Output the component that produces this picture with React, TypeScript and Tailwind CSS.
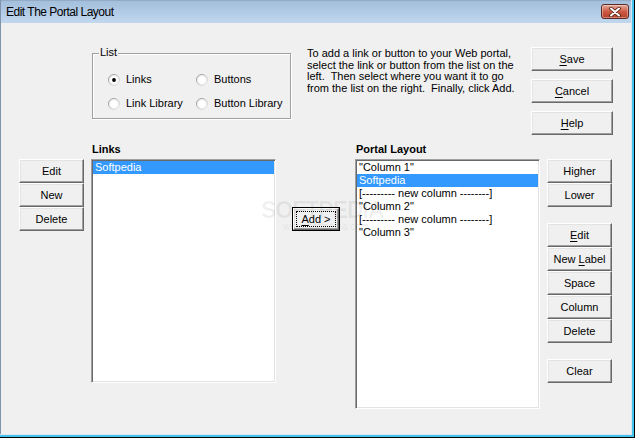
import React from "react";

const btnBase =
  "flex items-center justify-center bg-[#f0f0f0] border border-t-white border-l-white border-r-[#696969] border-b-[#696969] shadow-[inset_-1px_-1px_0_#a0a0a0,inset_1px_1px_0_#e3e3e3] text-[11px] text-black leading-none";

function Btn({ children, className = "" }: { children: React.ReactNode; className?: string }) {
  return <div className={`${btnBase} ${className}`}>{children}</div>;
}

function U({ children }: { children: React.ReactNode }) {
  return <span className="underline underline-offset-[2px] decoration-[1px]">{children}</span>;
}

function Radio({ checked, label }: { checked?: boolean; label: string }) {
  return (
    <div className="flex items-center h-[13px] gap-[6px]">
      <svg width="12" height="12" viewBox="0 0 12 12" className="shrink-0">
        <defs>
          <linearGradient id="rg" x1="0" y1="0" x2="1" y2="1">
            <stop offset="0" stopColor="#8a8a8a" />
            <stop offset="1" stopColor="#f2f2f2" />
          </linearGradient>
        </defs>
        <circle cx="6" cy="6" r="5.5" fill="#f7f7f7" stroke="url(#rg)" strokeWidth="1" />
        <circle cx="6" cy="6" r="4.3" fill="#fff" stroke="#e2e2e2" strokeWidth="0.6" />
        {checked && <circle cx="6" cy="6" r="1.9" fill="#000" />}
      </svg>
      <span className="leading-[13px]">{label}</span>
    </div>
  );
}

function Row({ text, selected }: { text: string; selected?: boolean }) {
  return (
    <div
      className={`h-[13px] leading-[13px] pl-[2px] whitespace-pre ${
        selected ? "bg-[#3399ff] text-white" : "text-black"
      }`}
    >
      {text}
    </div>
  );
}

const listCls =
  "bg-white border border-t-[#a0a0a0] border-l-[#a0a0a0] border-r-white border-b-white shadow-[inset_1px_1px_0_#696969,inset_-1px_-1px_0_#e3e3e3] p-[1px]";

export default function App() {
  return (
    <div className="w-[635px] h-[438px] bg-black pr-px pb-px font-['Liberation_Sans',Arial,sans-serif] text-[11px] text-black select-none">
      <div className="w-full h-full bg-[#45c2ec] pr-[2px] pb-[2px]">
        <div className="w-full h-full bg-[#d9e6f2] pr-px pb-px">
          <div className="w-full h-full flex flex-col border-l border-[#7f93ab]">
            {/* Title bar */}
            <div className="h-[23px] shrink-0 flex items-start justify-between bg-gradient-to-b from-[#a3bfdc] to-[#c1d7ee] border-t border-[#93abc6]">
              <span className="self-center pl-[5px] text-[12px] tracking-[-0.5px] text-black font-['Liberation_Sans',sans-serif]">
                Edit The Portal Layout
              </span>
              <div className="mt-[3px] mr-[2px] w-[28px] h-[15px] rounded-[3px] border border-[#5e2b22] bg-gradient-to-b from-[#e3aa9c] via-[#cc5a43] to-[#b6402a] shadow-[inset_0_0_0_1px_rgba(255,255,255,0.35)] flex items-center justify-center">
                <svg width="14" height="10" viewBox="0 0 14 10">
                  <path d="M3 1.5 L11 8.5 M11 1.5 L3 8.5" stroke="#4d1c14" strokeWidth="3.6" strokeLinecap="round" />
                  <path d="M3 1.5 L11 8.5 M11 1.5 L3 8.5" stroke="#ffffff" strokeWidth="2" strokeLinecap="round" />
                </svg>
              </div>
            </div>

            {/* Body */}
            <div className="relative flex-1 bg-[#f0f0f0] flex flex-col">
              {/* Top row */}
              <div className="flex items-start pt-[24px]">
                <div className="relative ml-[91px] mt-[6px] w-[199px] h-[66px] border border-[#a0a0a0] shadow-[inset_1px_1px_0_#fff,1px_1px_0_#fff]">
                  <span className="absolute -top-[8px] left-[6px] px-[1px] bg-[#f0f0f0] leading-[13px]">List</span>
                  <div className="grid grid-cols-[88px_auto] gap-y-[11px] pl-[15px] pt-[19px]">
                    <Radio checked label="Links" />
                    <Radio label="Buttons" />
                    <Radio label="Link Library" />
                    <Radio label="Button Library" />
                  </div>
                </div>
                <div className="ml-[16px] mt-[1px] w-[210px] leading-[11.5px] whitespace-pre">
                  <div>To add a link or button to your Web portal,</div>
                  <div>select the link or button from the list on the</div>
                  <div>left.  Then select where you want it to go</div>
                  <div>from the list on the right.  Finally, click Add.</div>
                </div>
                <div className="ml-[14px] flex flex-col gap-[8px]">
                  <Btn className="w-[82px] h-[24px]">
                    <U>S</U>ave
                  </Btn>
                  <Btn className="w-[82px] h-[24px]">
                    <U>C</U>ancel
                  </Btn>
                  <Btn className="w-[82px] h-[24px]">
                    <U>H</U>elp
                  </Btn>
                </div>
              </div>

              {/* Bottom row */}
              <div className="flex items-start mt-[7px]">
                <div className="ml-[18px] mt-[17px] w-[65px] flex flex-col">
                  <Btn className="h-[24px]">Edit</Btn>
                  <Btn className="h-[24px]">New</Btn>
                  <Btn className="h-[24px]">Delete</Btn>
                </div>

                <div className="ml-[7px] w-[185px] flex flex-col">
                  <div className="h-[17px] leading-[14px] font-bold pl-[1px]">Links</div>
                  <div className={`${listCls} h-[224px]`}>
                    <Row text="Softpedia" selected />
                  </div>
                </div>

                <div className="ml-[16px] mt-[65px] w-[48px] h-[24px] border border-black">
                  <div className={`${btnBase} w-full h-full p-[2px]`}>
                    <div className="w-full h-full border border-dotted border-black flex items-center justify-center">
                      <span>
                        <U>A</U>dd &gt;
                      </span>
                    </div>
                  </div>
                </div>

                <div className="ml-[15px] w-[185px] flex flex-col">
                  <div className="h-[17px] leading-[14px] font-bold pl-[1px]">Portal Layout</div>
                  <div className={`${listCls} h-[250px]`}>
                    <Row text={'"Column 1"'} />
                    <Row text="Softpedia" selected />
                    <Row text="[--------- new column --------]" />
                    <Row text={'"Column 2"'} />
                    <Row text="[--------- new column --------]" />
                    <Row text={'"Column 3"'} />
                  </div>
                </div>

                <div className="ml-[7px] mt-[17px] w-[65px] flex flex-col">
                  <Btn className="h-[24px]">Higher</Btn>
                  <Btn className="h-[24px]">Lower</Btn>
                  <Btn className="h-[24px] mt-[16px]">
                    <U>E</U>dit
                  </Btn>
                  <Btn className="h-[24px]">
                    New&nbsp;<U>L</U>abel
                  </Btn>
                  <Btn className="h-[24px]">Space</Btn>
                  <Btn className="h-[24px]">Column</Btn>
                  <Btn className="h-[24px]">Delete</Btn>
                  <Btn className="h-[24px] mt-[16px]">Clear</Btn>
                </div>
              </div>

              {/* Watermark overlay */}
              <div className="pointer-events-none absolute left-[260px] top-[175px] flex flex-col items-start">
                <span className="text-[23px] font-bold tracking-[-1px] leading-[24px] text-[#000000]/[0.06]">
                  SOFTPEDIA<sup className="text-[8px]">®</sup>
                </span>
                <span className="ml-[22px] text-[10px] leading-[10px] text-[#000000]/[0.08]">www.softpedia.com</span>
              </div>
            </div>
          </div>
        </div>
      </div>
    </div>
  );
}
